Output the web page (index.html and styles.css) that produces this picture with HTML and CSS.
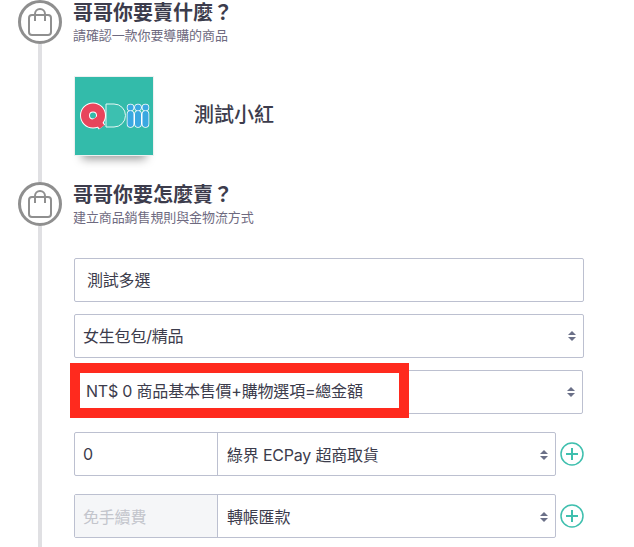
FILE: index.html
```html
<!DOCTYPE html>
<html lang="zh-Hant">
<head>
    <meta charset="UTF-8">
    <title>哥哥你要賣什麼</title>
    <link rel="stylesheet" href="styles.css">
</head>
<body>
    <div class="page">
        <section class="step step-first">
            <div class="rail">
                <div class="step-icon">
                    <svg width="26" height="28" viewBox="0 0 26 28" fill="none" stroke="#8f8f8f" stroke-width="2"><rect x="2" y="7" width="22" height="20" rx="3"/><path d="M8 13V6a5 5 0 0 1 10 0v7"/></svg>
                </div>
                <div class="rail-line"></div>
            </div>
            <div class="step-body">
                <h2>哥哥你要賣什麼？</h2>
                <p class="sub">請確認一款你要導購的商品</p>
                <div class="product">
                    <div class="product-logo">
                        <svg width="78" height="78" viewBox="0 0 78 78">
                            <rect width="78" height="78" fill="#33bbaa"/>
                            <path d="M31 27h8a11.500 11.500 0 0 1 0 23h-8z" fill="#3cc0b0" stroke="#e6f7f4" stroke-width="1"/>
                            <circle cx="18" cy="38.500" r="8" fill="none" stroke="#fff" stroke-width="10"/>
                            <path d="M20 41l7 9" stroke="#fff" stroke-width="8"/>
                            <circle cx="18" cy="38.500" r="8" fill="none" stroke="#e8455c" stroke-width="8"/>
                            <path d="M20 41l7 9" stroke="#e8455c" stroke-width="6"/>
                            <g stroke="#fff" stroke-width="7.500" stroke-linecap="round"><path d="M55.500 30.500v.1M63 30.500v.1M70.500 30.500v.1M55.500 37v10M63 37v10M70.500 37v10"/></g>
                            <g stroke="#3aa8e0" stroke-width="6" stroke-linecap="round"><path d="M55.500 30.500v.1M63 30.500v.1M70.500 30.500v.1M55.500 37v10M63 37v10M70.500 37v10"/></g>
                        </svg>
                    </div>
                    <div class="product-name">測試小紅</div>
                </div>
            </div>
        </section>

        <section class="step">
            <div class="rail">
                <div class="step-icon">
                    <svg width="26" height="28" viewBox="0 0 26 28" fill="none" stroke="#8f8f8f" stroke-width="2"><rect x="2" y="7" width="22" height="20" rx="3"/><path d="M8 13V6a5 5 0 0 1 10 0v7"/></svg>
                </div>
                <div class="rail-line"></div>
            </div>
            <div class="step-body">
                <h2>哥哥你要怎麼賣？</h2>
                <p class="sub">建立商品銷售規則與金物流方式</p>
                <div class="fields">
                    <div class="field">測試多選</div>
                    <div class="field field-select">
                        <span>女生包包/精品</span>
                        <svg class="arrows" width="8" height="10" viewBox="0 0 8 10"><path d="M4 0l4 4H0zM4 10L0 6h8z"/></svg>
                    </div>
                    <div class="field field-select field-short">
                        <span></span>
                        <svg class="arrows" width="8" height="10" viewBox="0 0 8 10"><path d="M4 0l4 4H0zM4 10L0 6h8z"/></svg>
                        <div class="callout">NT$ 0 商品基本售價+購物選項=總金額</div>
                    </div>
                    <div class="group-row">
                        <div class="group">
                            <div class="group-addon">0</div>
                            <div class="group-select">
                                <span>綠界 ECPay 超商取貨</span>
                                <svg class="arrows" width="8" height="10" viewBox="0 0 8 10"><path d="M4 0l4 4H0zM4 10L0 6h8z"/></svg>
                            </div>
                        </div>
                        <svg class="add" width="24" height="24" viewBox="0 0 24 24" fill="none" stroke="#3fbfae"><circle cx="12" cy="12" r="11" stroke-width="1.500"/><path d="M12 6v12M6 12h12" stroke-width="2"/></svg>
                    </div>
                    <div class="group-row">
                        <div class="group">
                            <div class="group-addon group-addon-off">免手續費</div>
                            <div class="group-select">
                                <span>轉帳匯款</span>
                                <svg class="arrows" width="8" height="10" viewBox="0 0 8 10"><path d="M4 0l4 4H0zM4 10L0 6h8z"/></svg>
                            </div>
                        </div>
                        <svg class="add" width="24" height="24" viewBox="0 0 24 24" fill="none" stroke="#3fbfae"><circle cx="12" cy="12" r="11" stroke-width="1.500"/><path d="M12 6v12M6 12h12" stroke-width="2"/></svg>
                    </div>
                </div>
            </div>
        </section>
    </div>
</body>
</html>
```

FILE: styles.css
```css
html, body {
    margin: 0;
    height: 100%;
    overflow: hidden;
    background: #fff;
}
body {
    font-family: Inter, "Noto Sans CJK TC", sans-serif;
    color: #3c3c4c;
}
.page {
    height: 547px;
    padding-left: 18px;
    display: flex;
    flex-direction: column;
}
.step {
    display: flex;
    flex: 1;
}
.step-first {
    flex: none;
    height: 182px;
}
.rail {
    width: 44px;
    margin-right: 11px;
    display: flex;
    flex-direction: column;
    align-items: center;
    flex: none;
}
.step-icon {
    width: 44px;
    height: 44px;
    box-sizing: border-box;
    border: 3px solid #8f8f8f;
    border-radius: 50%;
    display: flex;
    justify-content: center;
    align-items: center;
    flex: none;
}
.rail-line {
    width: 4px;
    flex: 1;
    background: #e0e0e3;
}
.step-body {
    flex: 1;
}
h2 {
    margin: 0;
    font-size: 20px;
    line-height: 26px;
    font-weight: 700;
    color: #3c3c4c;
}
.sub {
    margin: 0;
    font-size: 13px;
    line-height: 18px;
    color: #6e6a80;
    letter-spacing: -0.1px;
}
.product {
    display: flex;
    align-items: center;
    margin: 33px 0 0 2px;
}
.product-logo {
    width: 78px;
    height: 78px;
    box-shadow: 0 0 0 1px #eef0f0, 0 11px 9px -7px rgba(0, 0, 0, .4);
}
.product-logo svg {
    display: block;
}
.product-name {
    margin: 0 0 5px 41px;
    font-size: 20px;
    font-weight: 500;
}
.fields {
    margin: 32px 50px 0 1px;
    display: flex;
    flex-direction: column;
}
.field {
    position: relative;
    height: 44px;
    box-sizing: border-box;
    margin-bottom: 12px;
    padding: 0 7px 2px 12px;
    border: 1px solid #bcc0d0;
    border-radius: 2px;
    display: flex;
    align-items: center;
    justify-content: space-between;
    font-size: 16px;
    letter-spacing: -0.2px;
}
.field-select {
    padding-left: 8px;
}
.field-short {
    margin-right: 1px;
    margin-bottom: 18px;
}
.arrows {
    fill: #6b7088;
    flex: none;
    margin-top: 2px;
}
.callout {
    position: absolute;
    left: -5px;
    top: -8px;
    box-sizing: border-box;
    width: 339px;
    height: 55px;
    border: 10px solid #ff2a1e;
    background: #fff;
    padding: 0 0 2px 6px;
    display: flex;
    align-items: center;
    white-space: nowrap;
    font-size: 16px;
    letter-spacing: -0.2px;
}
.group-row {
    display: flex;
    align-items: center;
    margin-bottom: 18px;
    margin-right: -1px;
}
.group {
    width: 482px;
    height: 44px;
    box-sizing: border-box;
    border: 1px solid #bcc0d0;
    border-radius: 2px;
    display: flex;
    font-size: 16px;
    letter-spacing: -0.2px;
}
.group-addon {
    width: 143px;
    box-sizing: border-box;
    padding: 0 0 1px 8px;
    border-right: 1px solid #bcc0d0;
    display: flex;
    align-items: center;
    flex: none;
}
.group-addon-off {
    background: #f5f6f8;
    color: #c3c5cc;
}
.group-select {
    flex: 1;
    padding: 0 7px 1px 9px;
    display: flex;
    align-items: center;
    justify-content: space-between;
}
.add {
    margin-left: 4px;
    flex: none;
}
```
